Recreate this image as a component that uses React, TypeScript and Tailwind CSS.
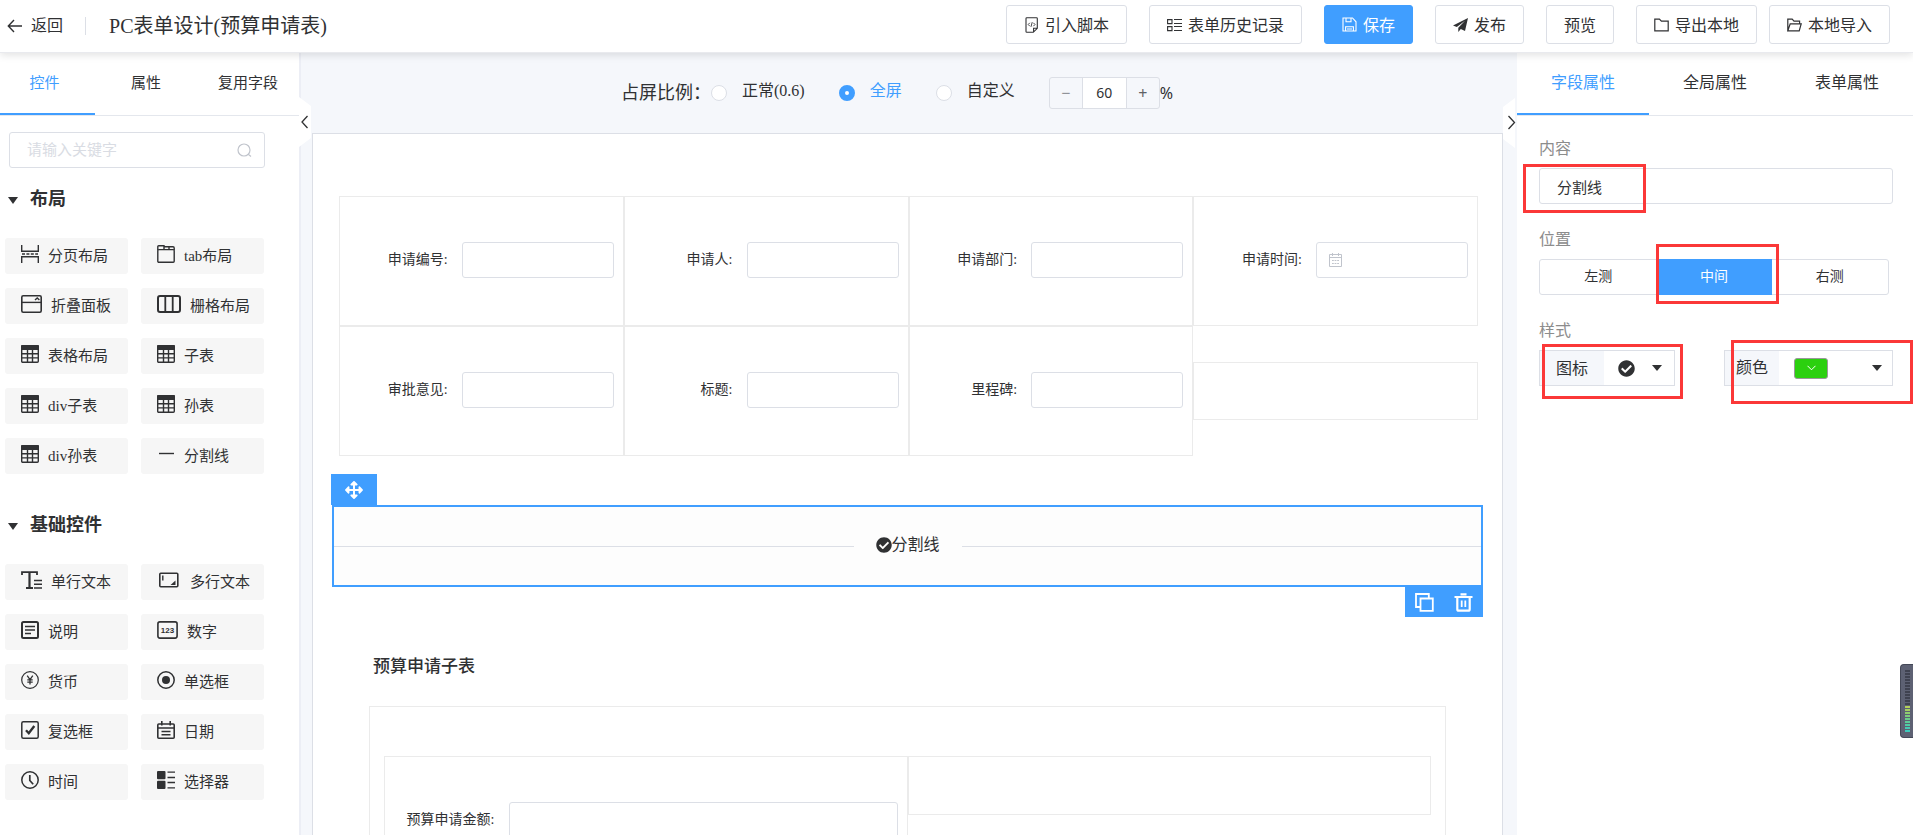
import { useState, type ReactNode } from 'react';
import { FaArrowsAlt, FaCheckCircle } from 'react-icons/fa';

const SERIF = "font-['Liberation_Serif','Noto_Sans_CJK_SC',serif]";
const SANS = "font-['Noto_Sans','Noto_Sans_CJK_SC',sans-serif]";

/* ---------- icons ---------- */

function Svg({ w = 18, h = 18, children }: { w?: number; h?: number; children: ReactNode }) {
  return (
    <svg width={w} height={h} viewBox={`0 0 ${w} ${h}`} fill="none" stroke="currentColor" strokeWidth="1.4" className="shrink-0" aria-hidden="true">
      {children}
    </svg>
  );
}

const PageBreakIcon = () => (
  <Svg>
    <path d="M.7 0v6.3h16.6V0M.7 18v-6.3h16.6V18" />
    <path d="M1 9h16" strokeDasharray="3 1.4" />
  </Svg>
);
const TabIcon = () => (
  <Svg>
    <rect x=".8" y="4.6" width="16.4" height="12.6" rx="1" />
    <path d="M.8 5V1.6q0-.9.9-.9H7v3.9M7 1.7h9q1.2 0 1.2 1.2V5M12 1.7v2.9" />
  </Svg>
);
const CollapseIcon = () => (
  <Svg w={21}>
    <rect x=".8" y=".8" width="19.4" height="16.4" rx="1.4" strokeWidth="1.6" />
    <path d="M.8 7.4h19.4" />
    <path d="M14 5l2.200-2 2.200 2" />
  </Svg>
);
const GridIcon = () => (
  <Svg w={24}>
    <rect x="1" y="1" width="22" height="16" rx="2" strokeWidth="2" />
    <path d="M8.300 1v16M15.700 1v16" strokeWidth="1.8" />
  </Svg>
);
const TableIcon = () => (
  <Svg>
    <rect x=".7" y=".7" width="16.600" height="16.600" rx="1" />
    <rect x="0" y="0" width="18" height="5" rx="1" fill="currentColor" stroke="none" />
    <path d="M6.500 4v13M11.500 4v13M1 8.700h16M1 12.900h16" />
  </Svg>
);
const LineIcon = () => (
  <Svg>
    <path d="M2 8.500h15" />
  </Svg>
);
const TextIcon = () => (
  <Svg w={21}>
    <path d="M1 4V1.200h15V4M5 17h7" strokeWidth="1.800" />
    <path d="M8.500 1v16" strokeWidth="2.200" />
    <path d="M13 9.500h8M13 13.300h8M13 17h8" strokeWidth="1.600" />
  </Svg>
);
const TextareaIcon = () => (
  <Svg w={24}>
    <rect x="2.800" y="2.300" width="18" height="13.500" rx="1" strokeWidth="1.600" />
    <path d="M5.800 4.500v5" />
    <path d="M18.500 9.500v4.500h-5z" fill="currentColor" stroke="none" />
  </Svg>
);
const NoteIcon = () => (
  <Svg>
    <rect x="1" y="1" width="16" height="16" rx="1.500" strokeWidth="2" />
    <path d="M4 5.500h10M4 9h10M4 12.500h6" strokeWidth="1.600" />
  </Svg>
);
const NumberIcon = () => (
  <Svg w={21}>
    <rect x=".9" y=".9" width="19.200" height="16.200" rx="2" strokeWidth="1.600" />
    <text x="10.500" y="11.800" textAnchor="middle" fontSize="8" fontWeight="700" fontFamily="Liberation Sans, sans-serif" fill="currentColor" stroke="none">123</text>
  </Svg>
);
const CurrencyIcon = () => (
  <Svg>
    <circle cx="9" cy="9" r="8.300" strokeWidth="1.200" />
    <path d="M6.200 4.700L9 8.600l2.800-3.900M9 8.600v5M6.300 8.800h5.400M6.300 11.100h5.400" strokeWidth="1.300" />
  </Svg>
);
const RadioIcon = () => (
  <Svg>
    <circle cx="9" cy="9" r="8.200" strokeWidth="1.500" />
    <circle cx="9" cy="9" r="4" fill="currentColor" stroke="none" />
  </Svg>
);
const CheckboxIcon = () => (
  <Svg>
    <rect x=".8" y=".8" width="16.400" height="16.400" rx="1.500" strokeWidth="1.500" />
    <path d="M5 9.200l2.800 3L13.300 5" strokeWidth="2.400" />
  </Svg>
);
const DateIcon = () => (
  <Svg>
    <rect x=".8" y="3" width="16.400" height="14.200" rx="1" strokeWidth="1.600" />
    <path d="M1 7h16M4.800 0v4.500M13.200 0v4.500M4.500 10.500h9M4.500 13.800h9" strokeWidth="1.600" />
  </Svg>
);
const ClockIcon = () => (
  <Svg>
    <circle cx="9" cy="9" r="8.200" strokeWidth="1.500" />
    <path d="M8.800 4v5.500l3.400 3.800" strokeWidth="1.700" />
  </Svg>
);
const SelectIcon = () => (
  <Svg>
    <rect x="0" y="0" width="8.500" height="8.300" rx="1" fill="currentColor" stroke="none" />
    <rect x="0" y="9.700" width="8.500" height="8.300" rx="1" fill="currentColor" stroke="none" />
    <path d="M10.500 1.200H18M10.500 6.500H18M10.500 11.500H18M10.500 16.800H18" strokeWidth="1.300" />
  </Svg>
);

const ScriptIcon = () => (
  <Svg w={15} h={16}>
    <path d="M2 3V1.500Q2 .7 2.800.7h9.700q.8 0 .8.8v9.800l-4 4H2.800Q2 15.300 2 14.500V3M13.300 11.300H9.600v4" strokeWidth="1.100" />
    <path d="M5.800 5.800l-1.600 1.700 1.600 1.700M9.400 5.800l1.600 1.700-1.600 1.700M8.200 5.200l-1.200 4.600" strokeWidth=".9" />
  </Svg>
);
const HistoryIcon = () => (
  <Svg w={15} h={14}>
    <path d="M.6 1.600h4.400v4H.6zM.6 8.600h4.400v4H.6z" strokeWidth="1.100" />
    <path d="M7 1.500h8M7 5.500h8M7 8.500h8M7 12.500h8" strokeWidth="1.100" />
  </Svg>
);
const SaveIcon = () => (
  <Svg w={15} h={15}>
    <path d="M1 1h9.500L14 4.800V14H1zM3.600 14v-4.200h7.800V14M4 1v3.800h5V1M5 12h5" strokeWidth="1.100" />
  </Svg>
);
const PlaneIcon = () => (
  <Svg w={15} h={14}>
    <path d="M15 0L0 7.500l3.800 1.600L12 2.800 5.300 9.700V14l2.500-3 4.200 2z" fill="currentColor" stroke="none" />
  </Svg>
);
const FolderIcon = () => (
  <Svg w={15} h={14}>
    <path d="M.8 1.200h4.600l2 2h6.800v9.600H.8z" strokeWidth="1.200" />
  </Svg>
);
const FolderOpenIcon = () => (
  <Svg w={15} h={14}>
    <path d="M.8 12.800V1.200h4.400l1.800 2h5.600v2.600M.8 12.800l2.400-7h11l-2 7z" strokeWidth="1.200" />
  </Svg>
);

const Caret = () => <span className="border-x-[5px] border-t-[6px] border-x-transparent border-t-[#303133]" />;

/* ---------- data ---------- */

const ACTIONS = [
  { label: '引入脚本', icon: <ScriptIcon />, gap: 'mr-[22px]' },
  { label: '表单历史记录', icon: <HistoryIcon />, gap: 'mr-[22px]' },
  { label: '保存', icon: <SaveIcon />, gap: 'mr-[22px]', primary: true },
  { label: '发布', icon: <PlaneIcon />, gap: 'mr-[22px]' },
  { label: '预览', gap: 'mr-[22px]' },
  { label: '导出本地', icon: <FolderIcon />, gap: 'mr-3' },
  { label: '本地导入', icon: <FolderOpenIcon />, gap: '' },
];

const GROUPS = [
  {
    title: '布局',
    items: [
      { label: '分页布局', icon: <PageBreakIcon /> },
      { label: 'tab布局', icon: <TabIcon /> },
      { label: '折叠面板', icon: <CollapseIcon /> },
      { label: '栅格布局', icon: <GridIcon /> },
      { label: '表格布局', icon: <TableIcon /> },
      { label: '子表', icon: <TableIcon /> },
      { label: 'div子表', icon: <TableIcon /> },
      { label: '孙表', icon: <TableIcon /> },
      { label: 'div孙表', icon: <TableIcon /> },
      { label: '分割线', icon: <LineIcon /> },
    ],
  },
  {
    title: '基础控件',
    items: [
      { label: '单行文本', icon: <TextIcon /> },
      { label: '多行文本', icon: <TextareaIcon /> },
      { label: '说明', icon: <NoteIcon /> },
      { label: '数字', icon: <NumberIcon /> },
      { label: '货币', icon: <CurrencyIcon /> },
      { label: '单选框', icon: <RadioIcon /> },
      { label: '复选框', icon: <CheckboxIcon /> },
      { label: '日期', icon: <DateIcon /> },
      { label: '时间', icon: <ClockIcon /> },
      { label: '选择器', icon: <SelectIcon /> },
    ],
  },
];

const FIELDS = [
  { id: 'no', label: '申请编号:' },
  { id: 'user', label: '申请人:' },
  { id: 'dept', label: '申请部门:' },
  { id: 'time', label: '申请时间:', date: true },
  { id: 'opinion', label: '审批意见:' },
  { id: 'title', label: '标题:' },
  { id: 'milestone', label: '里程碑:' },
];

const METER = [
  ...Array(12).fill('bg-[#3f4250]'),
  'bg-[#b5d05a]', 'bg-[#a5cf62]', 'bg-[#8fce6e]', 'bg-[#7ccd7c]', 'bg-[#6bcd8a]',
  'bg-[#5ccd98]', 'bg-[#50cca6]', 'bg-[#46cbb2]', 'bg-[#3ecabc]',
];

/* ---------- pieces ---------- */

function Header() {
  return (
    <header className="relative z-10 flex h-[53px] shrink-0 items-center border-b border-[#e9eaee] bg-white pr-[23px] shadow-[0_2px_8px_rgba(0,0,0,0.12)]">
      <button className="flex items-center gap-2 pl-[7px] text-base leading-6">
        <svg width="16" height="14" viewBox="0 0 16 14" fill="none" stroke="currentColor" strokeWidth="1.400" aria-hidden="true">
          <path d="M15 7H1.500M7 1L1.300 7 7 13" />
        </svg>
        返回
      </button>
      <span className="ml-[22px] h-[18px] w-px bg-[#dcdfe6]" />
      <h1 className="ml-[23px] text-xl leading-6">PC表单设计(预算申请表)</h1>
      <div className={`ml-auto flex pb-[3px] ${SANS}`}>
        {ACTIONS.map(a => (
          <button
            key={a.label}
            className={`flex h-[39px] items-center gap-[6px] rounded-[3px] border px-[17px] text-base leading-6 ${a.gap} ${
              a.primary ? 'border-[#409eff] bg-[#409eff] text-white' : 'border-[#dcdfe6] bg-white'
            }`}
          >
            {a.icon}
            {a.label}
          </button>
        ))}
      </div>
    </header>
  );
}

function Tabs({ items, className }: { items: { label: string; width: string }[]; className: string }) {
  const [active, setActive] = useState(0);
  return (
    <nav className={`flex h-[63px] border-b border-[#e4e7ed] ${className}`}>
      {items.map((t, i) => (
        <button
          key={t.label}
          onClick={() => setActive(i)}
          className={`border-b-2 ${t.width} ${i === active ? 'border-[#409eff] text-[#409eff]' : 'border-transparent'}`}
        >
          {t.label}
        </button>
      ))}
    </nav>
  );
}

function Palette() {
  return (
    <aside className="relative w-[301px] shrink-0 border-r-2 border-[#eceef5] bg-white">
      <Tabs
        className="text-[15px]"
        items={[
          { label: '控件', width: 'w-[95px] pr-[6px]' },
          { label: '属性', width: 'flex-1' },
          { label: '复用字段', width: 'flex-1' },
        ]}
      />
      <div className="mr-[34px] ml-[9px] mt-4 flex h-9 items-center rounded-[3px] border border-[#dcdfe6] pr-3">
        <input aria-label="搜索控件" placeholder="请输入关键字" className="h-full min-w-0 flex-1 pl-[17px] text-[15px] outline-none placeholder:text-[#d9dce3]" />
        <svg width="15" height="15" viewBox="0 0 15 15" fill="none" stroke="#c0c4cc" strokeWidth="1.200" aria-hidden="true">
          <circle cx="7" cy="7" r="6" />
          <path d="M11.200 11.200l2.800 2.300" />
        </svg>
      </div>
      {GROUPS.map((g, i) => (
        <section key={g.title} className={i === 0 ? 'mt-4' : 'mt-9'}>
          <h2 className={`flex items-center gap-3 pl-2 text-lg leading-7 font-bold ${SANS}`}>
            <span className="mt-1 border-x-[5px] border-t-[7px] border-x-transparent border-t-[#303133]" />
            {g.title}
          </h2>
          <div className="mt-[26px] mr-[35px] ml-[5px] grid grid-cols-2 gap-x-[13px] gap-y-[14px]">
            {g.items.map(it => (
              <button key={it.label} className="flex h-9 items-center gap-[9px] rounded-[3px] bg-[#f6f6f6] pl-4 text-[15px] leading-6 whitespace-nowrap">
                <span className="mb-1">{it.icon}</span>
                {it.label}
              </button>
            ))}
          </div>
        </section>
      ))}
      {/* collapse handle */}
      <button aria-label="收起左侧" className="absolute top-11 -right-3 z-10 h-[50px] w-3">
        <svg width="12" height="50" viewBox="0 0 12 50" aria-hidden="true">
          <path d="M0 0l12 9v32L0 50z" fill="#fff" />
          <path d="M8.500 19L3 25l5.500 6" fill="none" stroke="#303133" strokeWidth="1.300" />
        </svg>
      </button>
    </aside>
  );
}

function ScaleBar() {
  const [mode, setMode] = useState('全屏');
  return (
    <div className="flex h-20 shrink-0 items-center justify-center pr-6 text-base leading-6">
      <span className="text-lg leading-6">占屏比例：</span>
      {['正常(0.6)', '全屏', '自定义'].map(m => (
        <label key={m} className="mr-[34px] flex items-center gap-[15px]">
          <input
            type="radio"
            name="scale"
            checked={mode === m}
            onChange={() => setMode(m)}
            className="size-4 appearance-none rounded-full border border-[#dcdfe6] bg-white checked:border-[6px] checked:border-[#409eff]"
          />
          <span className={`pb-1 ${mode === m ? 'text-[#409eff]' : ''}`}>{m}</span>
        </label>
      ))}
      <div className={`flex h-8 w-[111px] rounded-[3px] border border-[#dcdfe6] ${SANS}`}>
        <button aria-label="减少" className="w-[33px] border-r border-[#dcdfe6] text-[#909399]">−</button>
        <input aria-label="占屏百分比" defaultValue="60" className="min-w-0 flex-1 bg-white text-center text-sm outline-none" />
        <button aria-label="增加" className="w-[33px] border-l border-[#dcdfe6] text-[#606266]">+</button>
      </div>
      <span className={SANS}>%</span>
    </div>
  );
}

function FieldCell({ id, label, date, inputClass }: { id: string; label: string; date?: boolean; inputClass: string }) {
  return (
    <div className="flex h-[130px] items-center justify-end gap-[14px] border border-[#ebebeb] pr-[9px] pb-[2px] text-sm leading-6">
      <label htmlFor={id} className="shrink-0">{label}</label>
      <div className={`flex h-9 items-center rounded-[3px] border border-[#dcdfe6] ${inputClass}`}>
        {date && (
          <svg width="13" height="14" viewBox="0 0 13 14" fill="none" stroke="#c0c4cc" className="ml-3 shrink-0" aria-hidden="true">
            <path d="M.5 1.500h12v12H.5zM.5 4.500h12M3.500 0v3M9.500 0v3" />
            <path d="M3 7.500h7M3 10.500h7" strokeDasharray="1.800 .8" />
          </svg>
        )}
        <input id={id} className="h-full min-w-0 flex-1 px-3 outline-none" />
      </div>
    </div>
  );
}

function Canvas() {
  return (
    <main className="flex min-w-0 flex-1 flex-col bg-[#f5f7fb]">
      <ScaleBar />
      <div className="mr-[14px] ml-[11px] flex-1 border border-b-0 border-[#dcdfe6] bg-white pt-[62px]">
        <div className="mr-6 ml-[26px] grid grid-cols-4 items-center">
          {FIELDS.map(f => <FieldCell key={f.id} {...f} inputClass="w-[152px]" />)}
          <div className="h-[58px] border border-[#ebebeb]" />
        </div>

        {/* selected divider */}
        <div className="relative mx-[19px] mt-[49px] flex h-[82px] items-center border-2 border-[#409eff] bg-[#fdfdfd]">
          <span className="h-px flex-1 bg-[#dcdfe6]" />
          <span className="flex items-center px-[22px] pb-[2px] text-base leading-6">
            <FaCheckCircle className="size-4" />
            分割线
          </span>
          <span className="h-px flex-1 bg-[#dcdfe6]" />
          <button aria-label="移动" className="absolute -top-[33px] -left-[3px] flex h-[31px] w-[46px] items-center justify-center bg-[#409eff] text-white">
            <FaArrowsAlt className="size-[18px]" />
          </button>
          <div className="absolute -right-[2px] -bottom-8 flex h-[30px] w-[78px] items-center justify-around bg-[#409eff] text-white">
            <button aria-label="复制">
              <svg width="19" height="19" viewBox="0 0 19 19" fill="none" stroke="currentColor" strokeWidth="1.800" aria-hidden="true">
                <path d="M5.500 5.500h12.300v12.300H5.500z" />
                <path d="M5 14H1V1h12.800v4" />
              </svg>
            </button>
            <button aria-label="删除">
              <svg width="19" height="19" viewBox="0 0 19 19" fill="none" stroke="currentColor" strokeWidth="2.200" aria-hidden="true">
                <path d="M.5 4h18M6.500 1.300h6M3.300 4v12.200q0 1.500 1.500 1.500h9.400q1.500 0 1.500-1.500V4" />
                <path d="M7.700 7.500v6.500M11.300 7.500v6.500" strokeWidth="1.800" />
              </svg>
            </button>
          </div>
        </div>

        <h3 className="mt-[68px] ml-[60px] text-[17px] leading-6 font-medium">预算申请子表</h3>
        <div className="mx-14 mt-[27px] border border-[#ebebeb] px-[14px] pt-[49px] pb-12">
          <div className="grid grid-cols-2 items-start">
            <FieldCell id="amount" label="预算申请金额:" inputClass="w-[389px]" />
            <div className="h-[59px] border border-[#ebebeb]" />
          </div>
        </div>
      </div>
    </main>
  );
}

function Marker({ className }: { className: string }) {
  return <span className={`pointer-events-none absolute border-[3px] border-[#fb3838] ${className}`} />;
}

function Inspector() {
  const [pos, setPos] = useState('中间');
  return (
    <aside className="relative w-[396px] shrink-0 bg-white text-base leading-6">
      <button aria-label="收起右侧" className="absolute top-[45px] -left-[14px] h-[50px] w-3">
        <svg width="14" height="50" viewBox="0 0 14 50" aria-hidden="true">
          <path d="M12 0L0 9v32l12 9z" fill="#fff" />
          <path d="M5.500 18l6 6.500-6 6.500" fill="none" stroke="#303133" strokeWidth="1.300" />
        </svg>
      </button>
      <Tabs
        className="text-base"
        items={[
          { label: '字段属性', width: 'flex-1' },
          { label: '全局属性', width: 'flex-1' },
          { label: '表单属性', width: 'flex-1' },
        ]}
      />
      <div className="flex flex-col gap-6 pt-[21px] pr-5 pl-[22px]">
        <div className="flex flex-col gap-[7px]">
          <label htmlFor="content" className="text-[#8c8c8c]">内容</label>
          <div className="relative">
            <input id="content" defaultValue="分割线" className={`h-9 w-full rounded-[3px] border border-[#dcdfe6] px-[17px] text-[15px] outline-none ${SANS}`} />
            <Marker className="-top-1 -left-4 h-[49px] w-[123px]" />
          </div>
        </div>

        <div className="flex flex-col gap-[7px]">
          <span className="text-[#8c8c8c]">位置</span>
          <div className="relative mr-1 flex h-9 rounded-[3px] border border-[#dcdfe6] text-sm">
            {['左测', '中间', '右测'].map(p => (
              <button key={p} onClick={() => setPos(p)} className={`flex-1 ${pos === p ? '-m-px bg-[#409eff] text-white' : ''}`}>
                {p}
              </button>
            ))}
            <Marker className="-top-4 left-[116px] h-[60px] w-[123px]" />
          </div>
        </div>

        <div className="flex flex-col gap-[7px]">
          <span className="text-[#8c8c8c]">样式</span>
          <div className="flex justify-between">
            <div className="relative flex h-9 w-[136px] border border-[#dcdfe6]">
              <span className={`flex w-16 items-center justify-center bg-[#f5f7fb] ${SANS}`}>图标</span>
              <button aria-label="选择图标" className="flex flex-1 items-center justify-between pr-3 pl-[14px]">
                <FaCheckCircle className="size-[17px]" />
                <Caret />
              </button>
              <Marker className="-top-[7px] left-[2px] h-[55px] w-[141px]" />
            </div>
            <div className="relative flex h-9 w-[169px] border border-[#dcdfe6]">
              <span className="flex w-[54px] items-center justify-end bg-[#f5f7fb] pr-[11px]">颜色</span>
              <button aria-label="选择颜色" className="flex flex-1 items-center justify-between pr-[10px] pl-[15px]">
                <span className="flex h-[21px] w-[34px] items-center justify-center rounded-[3px] border border-[#999] bg-[#2bd00f]">
                  <svg width="9" height="6" viewBox="0 0 9 6" fill="none" stroke="#fff" aria-hidden="true">
                    <path d="M.5.8l4 4 4-4" />
                  </svg>
                </span>
                <Caret />
              </button>
              <Marker className="-top-[11px] left-[6px] h-16 w-[182px]" />
            </div>
          </div>
        </div>
      </div>
    </aside>
  );
}

export default function App() {
  return (
    <div className={`relative flex h-screen flex-col overflow-hidden text-[#303133] ${SERIF}`}>
      <Header />
      <div className="flex min-h-0 flex-1">
        <Palette />
        <Canvas />
        <Inspector />
      </div>
      {/* level meter docked to the window edge */}
      <div className="absolute right-0 bottom-[97px] flex h-[74px] w-[13px] flex-col items-center justify-center gap-px rounded-l-[4px] border border-r-0 border-[#444857] bg-[#5d6173]">
        {METER.map((c, i) => <span key={i} className={`h-[2px] w-[5px] ${c}`} />)}
      </div>
    </div>
  );
}
